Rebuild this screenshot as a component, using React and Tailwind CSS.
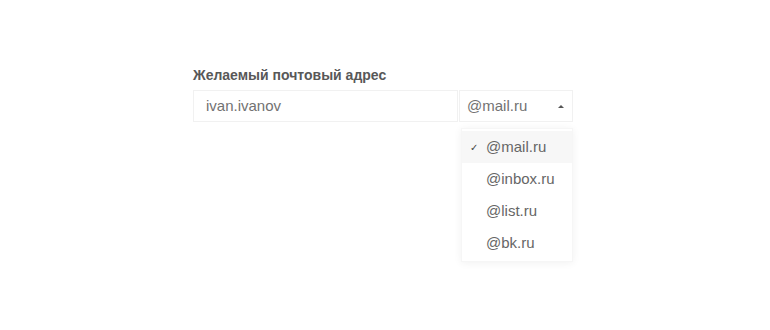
import { useState } from "react";

function App() {
    const [domain, setDomain] = useState("@mail.ru");
    const domains = ["@mail.ru", "@inbox.ru", "@list.ru", "@bk.ru"];

    return (
        <div className="w-[770px] h-[330px] bg-white pt-[66px] pl-[193px]" style={{ fontFamily: "Arial, 'Liberation Sans', sans-serif" }}>
            <label className="block text-[14px] font-bold text-[#585858] leading-[18px] mb-[6px]">
                Желаемый почтовый адрес
            </label>
            <div className="flex items-stretch h-[32px] w-[380px]">
                <div className="w-[265px] border border-[#f1f1f1] flex items-center pl-[12px] text-[15px] text-[#727272]">
                    ivan.ivanov
                </div>
                <div className="relative w-[114px] ml-[1px] border border-[#f1f1f1] flex items-center pl-[7px] text-[15px] text-[#727272]">
                    <span>{domain}</span>
                    <span className="ml-auto mr-[8px] w-0 h-0 border-l-[3px] border-r-[3px] border-b-[3px] border-l-transparent border-r-transparent border-b-[#555]"></span>
                    <ul className="absolute left-[1px] top-[37px] w-[112px] bg-white py-[2px] shadow-[0_1px_8px_rgba(0,0,0,0.06)] border border-[#f6f6f6]">
                        {domains.map((d) => (
                            <li
                                key={d}
                                onClick={() => setDomain(d)}
                                className={`relative h-[32px] flex items-center pl-[24px] text-[15px] text-[#666] ${d === domain ? "bg-[#f7f7f7]" : ""}`}
                            >
                                {d === domain && (
                                    <span className="absolute left-[8px] text-[10px] text-[#444]">✓</span>
                                )}
                                {d}
                            </li>
                        ))}
                    </ul>
                </div>
            </div>
        </div>
    );
}

export default App;
